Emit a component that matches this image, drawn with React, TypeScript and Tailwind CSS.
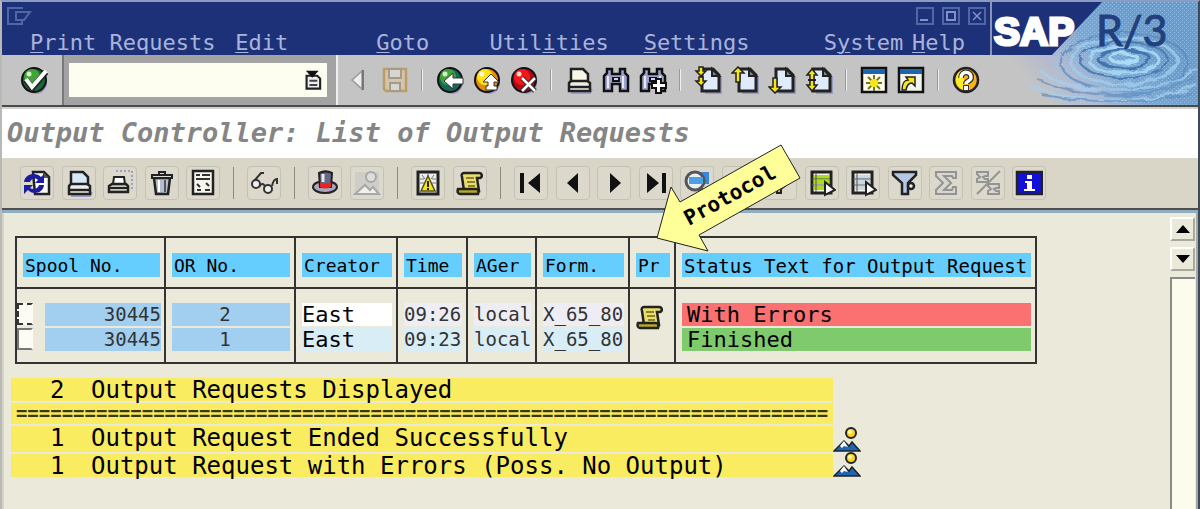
import React from "react";

type IconProps = { children: React.ReactNode; size?: string };

const Icon = ({ children, size = "h-7 w-7" }: IconProps) => (
  <svg viewBox="0 0 28 28" className={`${size} shrink-0`} fill="none" aria-hidden="true">
    {children}
  </svg>
);

const Ball = ({ color, dark }: { color: string; dark: string }) => (
  <>
    <circle cx="16" cy="17" r="11" fill="#9a9cc8" />
    <circle cx="14" cy="14" r="12" fill={dark} stroke="#111" strokeWidth="2" />
    <circle cx="12" cy="11" r="8" fill={color} />
    <circle cx="9" cy="8" r="2.5" fill="#fff" opacity=".8" />
  </>
);

const Page = () => (
  <>
    <path d="M11 27h16V10" stroke="#9a9cc8" strokeWidth="2" />
    <path d="M8 3h11l6 6v16H8z" fill="#dfeafa" stroke="#222" strokeWidth="3" />
    <path d="M18 3v7h7z" fill="#888" stroke="#222" strokeWidth="2" />
  </>
);

const Scroll = () => (
  <>
    <path d="M8 4h15c3 0 4 4 1 5h-3l2 13H8L6 8c-1-2 0-4 2-4z" fill="#e8dc6c" stroke="#222" strokeWidth="2.5" />
    <path d="M2 20h18c2 0 3 2 2 5H4c-2 0-3-2-2-5z" fill="#b9a825" stroke="#222" strokeWidth="2.5" />
    <path d="M10 9h8M11 13h8M12 17h7" stroke="#6d631c" strokeWidth="1.5" />
  </>
);

const Binoculars = () => (
  <>
    <path d="M5 3h5v5h8V3h5v4l3 3v15h-8v-7h-8v7H2V10l3-3z" fill="#9da3cc" stroke="#111" strokeWidth="2.5" />
    <path d="M6 10v12M21 10v12" stroke="#e8e8f4" strokeWidth="2" />
    <path d="M10 11h8v5h-8z" fill="#111" />
    <path d="M12 12h4v2h-4z" fill="#cfd2e8" />
  </>
);

const Printer = ({ paper = "#f8f6e8" }: { paper?: string }) => (
  <>
    <path d="M6 27h19l2-4" stroke="#9a9cc8" strokeWidth="2" />
    <path d="M6 3h12l5 5v9H6z" fill={paper} stroke="#222" strokeWidth="2.5" />
    <path d="m4 17 2-2h16l3 2v8H4z" fill="#eeeee6" stroke="#222" strokeWidth="2.5" />
    <path d="M4 21h20" stroke="#222" strokeWidth="2.5" />
  </>
);

const Sheet = ({ fill }: { fill: string }) => (
  <>
    <path d="M4 3h19v21H4z" fill="#f6f6ee" stroke="#222" strokeWidth="3" />
    <path d="M6 8h15M6 13h15M6 19h12" stroke={fill} strokeWidth="4" />
    <path d="M8 4v19M4 10h18M4 16h18" stroke="#555" />
    <path d="m17 13 10 8-10 5z" fill="#fff" stroke="#222" strokeWidth="2" />
  </>
);

const standardTools: { label: string; icon?: React.ReactNode }[] = [
  {
    label: "Previous",
    icon: (
      <>
        <path d="M18 5 8 14l10 9z" fill="#eee" stroke="#999" strokeWidth="1.5" />
        <path d="M19 4v20" stroke="#777" strokeWidth="2" />
      </>
    ),
  },
  {
    label: "Save",
    icon: (
      <>
        <path d="M3 3h22v22H5l-2-2z" fill="#d1c5ae" stroke="#bd9c68" strokeWidth="2.5" />
        <path d="M8 3h12v9H8zM9 17h10v8H9z" fill="#d6d6d2" stroke="#a69b84" strokeWidth="2" />
      </>
    ),
  },
  { label: "" },
  {
    label: "Back",
    icon: (
      <>
        <Ball color="#3fa535" dark="#126a5a" />
        <path d="m8 15 9-8v5h10v6H17v5z" fill="#fff" stroke="#333" />
      </>
    ),
  },
  {
    label: "Exit",
    icon: (
      <>
        <Ball color="#ffe21a" dark="#e88b0c" />
        <path d="m18 8 8 8h-5v4h3v4H13v-4h2v-4h-5z" fill="#fff" stroke="#333" />
      </>
    ),
  },
  {
    label: "Cancel",
    icon: (
      <>
        <Ball color="#f01818" dark="#b40818" />
        <path d="m12 12 13 13M25 12 12 25" stroke="#333" strokeWidth="5" />
        <path d="m12 12 13 13M25 12 12 25" stroke="#fff" strokeWidth="2.5" />
      </>
    ),
  },
  { label: "" },
  { label: "Print", icon: <Printer /> },
  { label: "Find", icon: <Binoculars /> },
  {
    label: "Find next",
    icon: (
      <>
        <Binoculars />
        <path d="M17 13h5v4h5v5h-5v5h-5v-5h-4v-5h4z" fill="#fff" stroke="#111" strokeWidth="2" />
      </>
    ),
  },
  { label: "" },
  {
    label: "First page",
    icon: (
      <>
        <Page />
        <path d="m7 10 5-5H9V1H5v4H2zM7 20l5-5H9v-4H5v4H2z" fill="#f5e614" stroke="#222" strokeWidth="1.5" />
      </>
    ),
  },
  {
    label: "Page up",
    icon: (
      <>
        <Page />
        <path d="m7 1 6 6H9v9H5V7H1z" fill="#f5e614" stroke="#222" strokeWidth="1.5" />
      </>
    ),
  },
  {
    label: "Page down",
    icon: (
      <>
        <Page />
        <path d="m7 27 6-6H9v-9H5v9H1z" fill="#f5e614" stroke="#222" strokeWidth="1.5" />
      </>
    ),
  },
  {
    label: "Last page",
    icon: (
      <>
        <Page />
        <path d="m7 3 5 6H9v10h3l-5 6-5-6h3V9H2z" fill="#f5e614" stroke="#222" strokeWidth="1.5" />
        <path d="M3 14h8" stroke="#222" strokeWidth="2" />
      </>
    ),
  },
  { label: "" },
  {
    label: "New session",
    icon: (
      <>
        <path d="M2 2h24v24H2z" fill="#fffef0" stroke="#111" strokeWidth="2.5" />
        <path d="M3 3h22v5H3z" fill="#1c66ae" />
        <path d="M14 9v16M6 17h16M8 11l12 12M20 11 8 23" stroke="#777511" strokeWidth="2" />
        <circle cx="14" cy="17" r="4" fill="#f5e614" />
      </>
    ),
  },
  {
    label: "Create shortcut",
    icon: (
      <>
        <path d="M2 2h24v24H2z" fill="#f4f4ee" stroke="#111" strokeWidth="2.5" />
        <path d="M3 3h22v5H3z" fill="#1c66ae" />
        <path d="M5 24c0-7 3-10 6-10l-2-3h9v9l-3-3c-4 0-5 3-6 7z" fill="#f5e614" stroke="#222" strokeWidth="1.5" />
      </>
    ),
  },
  { label: "" },
  {
    label: "Help",
    icon: (
      <>
        <circle cx="14" cy="14" r="12" fill="#f7b51a" stroke="#222" strokeWidth="2.5" />
        <path d="M6 7c3-3 5-3 6-3v20C4 22 2 13 6 7z" fill="#fbee28" />
        <path d="M9 12c0-8 11-7 10 0 0 3-5 3-5 6" stroke="#333" strokeWidth="6" />
        <path d="M11 19h6v6h-6z" fill="#333" />
        <path d="M9 12c0-8 11-7 10 0 0 3-5 3-5 6" stroke="#fff" strokeWidth="3.5" />
        <path d="M12 20h4v4h-4z" fill="#fff" />
      </>
    ),
  },
];

const listTools = [
  {
    label: "Refresh",
    icon: (
      <>
        <path d="M10 3h11l5 5v17H12z" fill="#fff" stroke="#222" strokeWidth="2.5" />
        <path d="M20 3v6h6z" fill="#555" />
        <path d="M1 13C2 4 14 3 18 8l3-3v9h-9l3-3c-3-3-7-1-8 2zM21 16c-1 9-12 10-16 5l-4 4v-9h9l-3 3c3 2 8 1 9-3z" fill="#1c1ca0" />
      </>
    ),
  },
  { label: "Print directly", icon: <Printer paper="#d4e8f8" /> },
  {
    label: "Print with options",
    icon: (
      <>
        <path d="M10 2h16v20" stroke="#9ca0d0" strokeWidth="2" strokeDasharray="2 2" />
        <path d="M8 8h10l1 7H7z" fill="#fff" stroke="#222" strokeWidth="2" />
        <path d="m3 17 3-2h14l2 2v6H3z" fill="#c8c8c0" stroke="#222" strokeWidth="2.5" />
        <path d="M3 19h18" stroke="#222" strokeWidth="2" />
      </>
    ),
  },
  {
    label: "Delete",
    icon: (
      <>
        <path d="M6 9h16l-2 16H8z" fill="#b7bdd0" stroke="#222" strokeWidth="2.5" />
        <path d="M4 6h20v3H4zM11 3h6v3h-6z" fill="#ddd" stroke="#222" strokeWidth="2" />
        <path d="M11 11v12" stroke="#fff" strokeWidth="2" />
        <path d="M17 11v12" stroke="#555" strokeWidth="2" />
      </>
    ),
  },
  {
    label: "Display attributes",
    icon: (
      <>
        <path d="M4 2h20v23H4z" fill="#f6f6ee" stroke="#222" strokeWidth="2.5" />
        <path d="M7 6h4M13 6h8M7 10h14M8 15l3 3M17 14l3 3M8 21h4M16 21h5" stroke="#333" strokeWidth="2" />
      </>
    ),
  },
];

const displayTools = [
  {
    label: "Display contents",
    icon: (
      <>
        <path d="M4 12 11 4h3M22 17c1-5 2-7 5-7v5M9 18c2-4 5-4 6 0" stroke="#333" strokeWidth="2" />
        <ellipse cx="6" cy="15" rx="4" ry="4" fill="#eee" stroke="#333" strokeWidth="2" />
        <ellipse cx="18" cy="20" rx="4" ry="4" fill="#eee" stroke="#333" strokeWidth="2" />
      </>
    ),
  },
];

const infoTools = [
  {
    label: "Output status",
    icon: (
      <>
        <ellipse cx="14" cy="18" rx="12" ry="6" fill="#a4a9c0" stroke="#222" strokeWidth="2" />
        <path d="M8 4c4-2 9-2 13 0l-1 14H9z" fill="#646a85" stroke="#222" strokeWidth="2" />
        <path d="M9 13c3 2 8 2 11 0v5c-4 2-8 2-11 0z" fill="#ed2228" />
        <path d="M12 5v8" stroke="#e8e8f0" strokeWidth="3" />
      </>
    ),
  },
  {
    label: "Overview",
    icon: (
      <>
        <path d="M2 3h24v22H2z" fill="#cfcdc8" />
        <path d="m2 25 10-9 5 5 3-3 6 7z" fill="#f0f0ec" stroke="#a7a7a5" strokeWidth="2" />
        <circle cx="18" cy="8" r="5" fill="#ddd" stroke="#a7a7a5" strokeWidth="2" />
      </>
    ),
  },
];

const logTools = [
  {
    label: "Messages",
    icon: (
      <>
        <path d="M4 3h20v22H4z" fill="#eee" stroke="#222" strokeWidth="3" />
        <path d="M14 4v5M8 6l3 4M20 6l-3 4M6 14h4M18 14h4M6 10h4M18 10h4" stroke="#777" />
        <path d="m14 7 7 15H7z" fill="#f5e614" stroke="#55501a" strokeWidth="1.5" />
        <path d="M14 12v6M14 19v2" stroke="#222" strokeWidth="2" />
      </>
    ),
  },
  { label: "Protocol", icon: <Scroll /> },
];

const Sigma = ({ d }: { d: string }) => (
  <path d={d} fill="#d7d7d2" stroke="#949492" strokeWidth="2" />
);

const navTools = [
  { label: "First", icon: <path d="M3 4h4v20H3zM23 4v20L11 14z" fill="#111" /> },
  { label: "Previous entry", icon: <path d="M19 4v20L8 14z" fill="#111" /> },
  { label: "Next entry", icon: <path d="M10 4v20l11-10z" fill="#111" /> },
  { label: "Last", icon: <path d="M5 4v20l12-10zM20 4h4v20h-4z" fill="#111" /> },
  {
    label: "Details",
    icon: (
      <>
        <path d="M12 3h14v12H12z" fill="#3a86d8" />
        <circle cx="12" cy="12" r="9" fill="#e9eff5" stroke="#555" strokeWidth="3" />
        <path d="M6 8h14v7H6z" fill="#4aa0e0" />
        <path d="m17 19 5 6" stroke="#555" strokeWidth="4" />
      </>
    ),
  },
  { label: "Sort ascending", icon: <path d="M10 12h8l-4 8z" fill="#aaa" stroke="#222" strokeWidth="2" /> },
  { label: "Sort descending", icon: <path d="M6 16h14l-5 4v4h-4v-4z" fill="#c9c04a" stroke="#222" strokeWidth="2" /> },
  { label: "Select all", icon: <Sheet fill="#a9dc1c" /> },
  { label: "Deselect all", icon: <Sheet fill="#cbd9e2" /> },
  {
    label: "Filter",
    icon: (
      <>
        <path d="M2 3h23v3l-8 8v11h-6V14L2 6z" fill="#b4c8e6" stroke="#222" strokeWidth="2.5" />
        <circle cx="20" cy="17" r="3" fill="#eee" stroke="#222" strokeWidth="2.5" />
      </>
    ),
  },
  { label: "Sum", icon: <Sigma d="M4 3h20v6h-3l-1-2h-8l7 7-7 7h8l1-3h3v7H4v-4l7-7-7-7z" /> },
  {
    label: "Subtotal",
    icon: (
      <>
        <path d="M3 25 26 2" stroke="#949492" strokeWidth="2" />
        <Sigma d="M3 3h11v4h-3l-2 1 2 2h3v3H3v-3l3-2-3-3z" />
        <Sigma d="M14 15h11v4h-3l-2 1 2 2h3v3H14v-3l3-2-3-3z" />
      </>
    ),
  },
  {
    label: "Information",
    icon: (
      <>
        <path d="M2 3h25v22H2z" fill="#1010d8" stroke="#222" strokeWidth="2.5" />
        <path d="M12 6h5v4h-5zM10 12h7v8h3v2H9v-2h3v-6h-2z" fill="#fff" />
      </>
    ),
  },
];

const menus = [
  ["", "P", "rint Requests"],
  ["", "E", "dit"],
  ["", "G", "oto"],
  ["Util", "i", "ties"],
  ["", "S", "ettings"],
  ["S", "y", "stem"],
  ["", "H", "elp"],
];

const columns = [
  { title: "Spool No.", width: "w-[149px]" },
  { title: "OR No.", width: "w-[130px]" },
  { title: "Creator", width: "w-[102px]" },
  { title: "Time", width: "w-[70px]" },
  { title: "AGer", width: "w-[69px]" },
  { title: "Form.", width: "w-[93px]" },
  { title: "Pr", width: "w-[46px]" },
  { title: "Status Text for Output Request", width: "w-[361px]" },
];

const requests = [
  {
    spool: "30445", no: "2", creator: "East", time: "09:26", dev: "local", form: "X_65_80",
    log: true, status: "With Errors", strip: "bg-[#fb7070]", light: "bg-[#eeedf4]", user: "bg-white",
    pad: "pt-[14px]", box: "border-dashed border-[#333] border-r-transparent",
  },
  {
    spool: "30445", no: "1", creator: "East", time: "09:23", dev: "local", form: "X_65_80",
    log: false, status: "Finished", strip: "bg-[#80ca6e]", light: "bg-[#d9edf7]", user: "bg-[#d9edf7]",
    pad: "pt-[2px] pb-[11px]", box: "border-solid border-[#777] border-r-transparent",
  },
];

const ToolGroup = ({ tools, width }: { tools: { label: string; icon: React.ReactNode }[]; width: string }) => (
  <div className={`flex shrink-0 justify-between ${width}`}>
    {tools.map((tool) => (
      <button
        key={tool.label}
        aria-label={tool.label}
        className="flex h-[34px] w-[34px] items-center justify-center rounded-sm border border-[#c4c2b5] bg-[#dcd9cc]"
      >
        <Icon>{tool.icon}</Icon>
      </button>
    ))}
  </div>
);

const Divider = () => <div className="mx-[13px] h-8 w-px shrink-0 bg-[#8b897e]" />;

const Banner = () => (
  <svg viewBox="0 0 206 103" className="h-[103px] w-[206px] shrink-0" role="img" aria-label="SAP R/3">
    <defs>
      <linearGradient id="water" x1="0.1" y1="0.6" x2="0.75" y2="0.3">
        <stop offset="0" stopColor="#c4c4c4" />
        <stop offset="0.3" stopColor="#b0b8d0" />
        <stop offset="0.6" stopColor="#79a9d8" />
        <stop offset="1" stopColor="#689dcf" />
      </linearGradient>
      <pattern id="dots" width="4" height="4" patternUnits="userSpaceOnUse">
        <path d="M0 0h1v1H0zM2 2h1v1H2z" fill="#b9d3ec" />
      </pattern>
      <filter id="soft">
        <feTurbulence type="fractalNoise" baseFrequency="0.06 0.15" numOctaves="2" seed="4" result="noise" />
        <feDisplacementMap in="SourceGraphic" in2="noise" scale="7" />
        <feGaussianBlur stdDeviation="0.7" />
      </filter>
    </defs>
    <rect width="206" height="103" fill="url(#water)" />
    <rect x="60" width="146" height="103" fill="url(#dots)" opacity="0.5" />
    <g fill="none" filter="url(#soft)">
      <ellipse cx="132" cy="56" rx="14" ry="4" stroke="#a9dcf6" strokeWidth="3" />
      <ellipse cx="132" cy="57" rx="26" ry="9" stroke="#3f74b0" strokeWidth="3" />
      <ellipse cx="132" cy="58" rx="35" ry="13" stroke="#a2d4f2" strokeWidth="3" />
      <ellipse cx="132" cy="58" rx="44" ry="18" stroke="#4b7db5" strokeWidth="2" />
      <ellipse cx="132" cy="59" rx="53" ry="23" stroke="#9fcdee" strokeWidth="3" opacity="0.8" />
      <ellipse cx="132" cy="60" rx="63" ry="29" stroke="#5688bd" strokeWidth="2" opacity="0.7" />
      <path d="M48 68c20 24 120 30 156-2M36 82c40 20 120 24 168 0" stroke="#a6d0ee" strokeWidth="3" opacity="0.7" />
      <path d="M44 76c36 20 116 26 160-2M50 93c50 8 100 10 150-2" stroke="#5c8dc2" strokeWidth="2" opacity="0.7" />
    </g>
    <path d="M0 0h110L60 53H0z" fill="#1d3179" />
    <text x="2" y="43" className="font-['Liberation_Sans'] text-[39px] font-bold" fill="#fff" stroke="#fff" strokeWidth="3">
      SAP
    </text>
    <text x="104" y="44" className="font-['Lato'] text-[43px]" fill="#22407e" stroke="#22407e" strokeWidth="1">
      R/3
    </text>
  </svg>
);

const Landscape = ({ label }: { label: string }) => (
  <svg viewBox="0 0 28 25" className="h-[25px] w-7" role="img" aria-label={label}>
    <path d="m1 24 10-10 5 5 3-4 8 9z" fill="#1d66b4" stroke="#222" strokeWidth="1.5" />
    <path d="m7 19 4-5 4 6-4-1-2 2z" fill="#fff" />
    <circle cx="18" cy="6" r="5" fill="#fbd51f" stroke="#222" strokeWidth="2" />
    <circle cx="17" cy="5" r="2" fill="#fff9b0" />
  </svg>
);

const SummaryLine = ({ count, text, height }: { count: string; text: string; height: string }) => (
  <p className={`flex bg-[#faec60] pl-[39px] text-[24px] leading-[25px] whitespace-nowrap ${height}`}>
    <span className="w-[41px]">{count}</span>
    {text}
  </p>
);

export default function App() {
  return (
    <div className="relative flex min-h-screen flex-col overflow-hidden border-x-2 border-t-2 border-t-[#8c9cc0] border-r-[#3c4a5c] border-l-[#b8b8b4] bg-[#ebe9d9] font-['DejaVu_Sans_Mono',monospace] text-black">
      <header className="flex border-b-2 border-[#4a4a4a] bg-[#c4c4c4]">
        <div className="min-w-0 flex-1">
          <div className="h-[53px] border-r-2 border-[#8a94b8] bg-[#1d3179]">
            <div className="flex h-[28px] items-center justify-between pr-1 pl-1">
              <svg viewBox="0 0 26 20" className="h-5 w-[26px]" fill="none" stroke="#5266a6" strokeWidth="2" aria-hidden="true">
                <path d="M17 2H2v16h14v-3M10 6h14l-6 8h-8z" />
              </svg>
              <div className="flex gap-2">
                <button aria-label="Minimize" className="h-[18px] w-[18px] border-2 border-[#5266a6] p-[2px]">
                  <span className="mt-2 block h-[2px] w-2 bg-[#8292c8]" />
                </button>
                <button aria-label="Maximize" className="h-[18px] w-[18px] border-2 border-[#5266a6] p-[2px]">
                  <span className="block h-[10px] w-[10px] border-2 border-[#8292c8]" />
                </button>
                <button aria-label="Close" className="h-[18px] w-[18px] border-2 border-[#5266a6] p-[2px]">
                  <svg viewBox="0 0 10 10" stroke="#8292c8" strokeWidth="1.5">
                    <path d="m1 1 8 8M9 1 1 9" />
                  </svg>
                </button>
              </div>
            </div>
            <nav className="grid grid-cols-[205fr_141fr_113fr_154fr_180fr_88fr_78fr] pl-7">
              {menus.map(([before, key, after]) => (
                <button key={key} className="text-left text-[22px] leading-[25px] whitespace-nowrap text-[#a9b4da]">
                  {before}
                  <span className="underline decoration-1 underline-offset-2">{key}</span>
                  {after}
                </button>
              ))}
            </nav>
          </div>
          <div className="flex h-[50px] items-stretch">
            <button aria-label="Enter" className="flex w-[60px] items-center justify-center pl-1">
              <Icon>
                <Ball color="#3fa535" dark="#126a3a" />
                <path d="m6 14 6 8L26 6" stroke="#222" strokeWidth="6" />
                <path d="m6 13 6 8L26 5" stroke="#fff" strokeWidth="4" />
              </Icon>
            </button>
            <div className="w-[276px] border-r-2 border-l-2 border-r-[#eee] border-l-[#777] bg-[#a3a3a3] py-2 pr-[9px] pl-[5px]">
              <div className="flex h-[34px] items-center bg-[#fefef0] pr-1">
                <input aria-label="Command" className="min-w-0 flex-1 bg-transparent px-2 outline-none" />
                <button aria-label="Command history">
                  <Icon size="h-5 w-5">
                    <path d="M5 8h15l4 4v14H5z" fill="#eee" stroke="#222" strokeWidth="3" />
                    <path d="M9 15h11M9 21h11" stroke="#444" strokeWidth="3" />
                    <path d="M4 1h18l-9 10z" fill="#111" />
                  </Icon>
                </button>
              </div>
            </div>
            <div className="flex items-center pl-px">
              {standardTools.map((tool, i) =>
                tool.icon ? (
                  <button key={i} aria-label={tool.label} className="flex w-[37px] justify-center">
                    <Icon>{tool.icon}</Icon>
                  </button>
                ) : (
                  <div key={i} className="mx-2 h-[22px] w-[2px] border-l border-[#999] bg-[#eee]" />
                )
              )}
            </div>
          </div>
        </div>
        <Banner />
      </header>

      <h1 className="h-[51px] border-t-2 border-[#d2d2cc] bg-white pl-[5px] text-[27px] leading-[48px] font-bold whitespace-nowrap text-[#858585] italic">
        Output Controller: List of Output Requests
      </h1>

      <div className="flex h-[52px] items-center border-b-2 border-[#4e4e4c] bg-[#d9d6c8] pl-[18px]">
        <ToolGroup tools={listTools} width="w-[200px]" />
        <Divider />
        <ToolGroup tools={displayTools} width="w-[34px]" />
        <Divider />
        <ToolGroup tools={infoTools} width="w-[76px]" />
        <Divider />
        <ToolGroup tools={logTools} width="w-[76px]" />
        <Divider />
        <ToolGroup tools={navTools} width="w-[532px]" />
      </div>

      <main className="flex flex-1 border-t-[3px] border-[#8fadc0]">
        <div className="min-w-0 flex-1 border-l-2 border-[#d5d3c5] pt-[23px] pl-[7px]">
          <table className="ml-1 w-[1021px] table-fixed border-collapse border-2 border-[#333]">
            <thead>
              <tr className="h-[51px] border-b-2 border-[#333]">
                {columns.map((col) => (
                  <th key={col.title} className={`${col.width} border-x-2 border-[#333] pt-1 pr-1 pl-[6px] text-left font-normal`}>
                    <div
                      className={
                        col.title.length > 20
                          ? "h-6 bg-[#66ceff] pl-[2px] text-[19px] leading-[26px] whitespace-nowrap"
                          : "h-6 bg-[#66ceff] pl-[2px] text-[18px] leading-[26px] whitespace-nowrap"
                      }
                    >
                      {col.title}
                    </div>
                  </th>
                ))}
              </tr>
            </thead>
            <tbody className="text-[19px] leading-[23px] whitespace-nowrap text-[#333]">
              {requests.map((r) => {
                const cell = `${r.pad} border-x-2 border-[#333] pr-1 pl-[6px] align-top`;
                return (
                  <tr key={r.time}>
                    <td className={`${r.pad} border-x-2 border-[#333] pr-[3px] align-top`}>
                      <div className="flex justify-between">
                        <input
                          type="checkbox"
                          aria-label={`Select output request ${r.no}`}
                          className={`h-[22px] w-4 appearance-none border-2 bg-[#fcfcf4] ${r.box}`}
                        />
                        <div className="h-[23px] w-[116px] bg-[#a2cff0] text-right">{r.spool}</div>
                      </div>
                    </td>
                    <td className={cell}>
                      <div className="h-[23px] bg-[#a2cff0] pr-3 text-center">{r.no}</div>
                    </td>
                    <td className={cell}>
                      <div className={`h-[23px] text-[22px] text-black ${r.user}`}>{r.creator}</div>
                    </td>
                    <td className={cell}>
                      <div className={`h-[23px] ${r.light}`}>{r.time}</div>
                    </td>
                    <td className={cell}>
                      <div className={`h-[23px] ${r.light}`}>{r.dev}</div>
                    </td>
                    <td className={cell}>
                      <div className={`h-[23px] ${r.light}`}>{r.form}</div>
                    </td>
                    <td className={cell}>
                      {r.log && (
                        <div className="h-[23px]">
                          <Icon>
                            <Scroll />
                          </Icon>
                        </div>
                      )}
                    </td>
                    <td className={cell}>
                      <div className={`h-[23px] pl-[5px] text-[22px] text-black ${r.strip}`}>{r.status}</div>
                    </td>
                  </tr>
                );
              })}
            </tbody>
          </table>

          <div className="flex items-end pt-[14px]">
            <div className="flex w-[822px] flex-col gap-[2px]">
              <SummaryLine count="2" text="Output Requests Displayed" height="h-[23px]" />
              <p className="h-[21px] bg-[#faec60] text-center text-[19px] leading-[21px] font-bold whitespace-nowrap text-[#3c3814]">
                {"=".repeat(71)}
              </p>
              <SummaryLine count="1" text="Output Request Ended Successfully" height="h-[26px]" />
              <SummaryLine count="1" text="Output Request with Errors (Poss. No Output)" height="h-[23px]" />
            </div>
            <div className="flex flex-col">
              <Landscape label="Ended successfully" />
              <Landscape label="Ended with errors" />
            </div>
          </div>
        </div>

        <div className="flex w-7 flex-col gap-[6px] border-r-2 border-[#a8a6a0] pt-1 pr-px">
          <button aria-label="Scroll up" className="flex h-6 items-center justify-center border-2 border-[#aaa89c] border-t-white border-l-white">
            <svg viewBox="0 0 14 8" className="h-2 w-[14px]"><path d="M0 8h14L7 0z" /></svg>
          </button>
          <button aria-label="Scroll down" className="flex h-6 items-center justify-center border-2 border-[#aaa89c] border-t-white border-l-white">
            <svg viewBox="0 0 14 8" className="h-2 w-[14px]"><path d="M0 0h14L7 8z" /></svg>
          </button>
          <div className="flex-1 border-t-2 border-l-2 border-[#8a8a86] bg-[#fcfcec]" />
        </div>
      </main>

      <svg viewBox="0 0 150 112" className="absolute top-[141px] left-[653px] h-[112px] w-[150px]">
        <path d="M2 95 16 44l9 15L126 2l19 33L44 92l9 16z" fill="#ffff99" stroke="#222" />
        <text x="34" y="83" transform="rotate(-29 34 83)" className="text-[21px] font-bold">
          Protocol
        </text>
      </svg>
    </div>
  );
}
